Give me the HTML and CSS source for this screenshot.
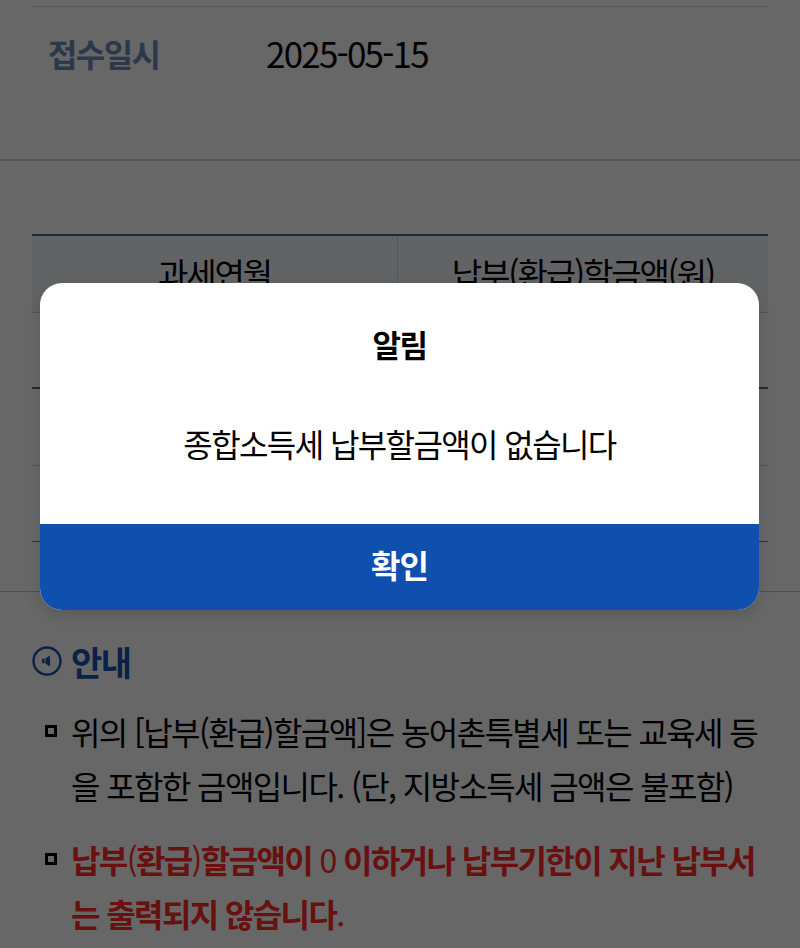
FILE: index.html
```html
<!DOCTYPE html>
<html lang="ko">
<head>
  <meta charset="UTF-8" />
  <title>종합소득세 납부</title>
  <link rel="stylesheet" href="styles.css">
</head>
<body>

  <div class="info-section">
    <div class="info-row">
      <div class="info-label">접수일시</div>
      <div class="info-value">2025-05-15</div>
    </div>
  </div>

  <div class="table-section">
    <div class="tax-table">
      <div class="table-head">
        <div class="head-cell">과세연월</div>
        <div class="head-cell">납부(환급)할금액(원)</div>
      </div>
      <div class="table-row row-sub"></div>
      <div class="table-row row-body"></div>
      <div class="table-row row-last"></div>
    </div>
  </div>

  <div class="notice">
    <h2 class="notice-title">
      <svg class="notice-icon" viewBox="0 0 30 30">
        <circle cx="15" cy="15" r="13.5" fill="none" stroke="#1c54b0" stroke-width="2.4"/>
        <path d="M10 12.8h2.6v4.4H10z M13.4 12.6l4.6-3v10.8l-4.6-3z" fill="#1c54b0"/>
      </svg>
      안내
    </h2>
    <ul class="notice-list">
      <li class="notice-item">
        <span class="bullet"></span>
        <span>위의 [납부(환급)할금액]은 농어촌특별세 또는 교육세 등을 포함한 금액입니다. (단, 지방소득세 금액은 불포함)</span>
      </li>
      <li class="notice-item notice-warn">
        <span class="bullet"></span>
        <span>납부<span class="thin">(</span>환급<span class="thin">)</span>할금액이 <span class="thin">0</span> 이하거나 납부기한이 지난 납부서는 출력되지 않습니다<span class="thin">.</span></span>
      </li>
    </ul>
  </div>

  <div class="overlay">
    <div class="modal">
      <div class="modal-title">알림</div>
      <div class="modal-text">종합소득세 납부할금액이 없습니다</div>
      <button class="modal-btn">확인</button>
    </div>
  </div>

</body>
</html>
```

FILE: styles.css
```css
* {
  box-sizing: border-box;
}

body {
  margin: 0;
  height: 948px;
  overflow: hidden;
  position: relative;
  font-family: 'Noto Sans CJK KR', 'Noto Sans', sans-serif;
  background: #fff;
  color: #000;
}

.info-section {
  padding: 6px 32px 0;
  height: 161px;
  border-bottom: 2px solid #d8d8d8;
}

.info-row {
  display: flex;
  align-items: center;
  height: 92px;
  border-top: 1px solid #d8d8d8;
  padding-left: 16px;
}

.info-label {
  width: 218px;
  font-size: 32px;
  font-weight: 700;
  letter-spacing: -1.6px;
  color: #6c8db8;
}

.info-value {
  font-size: 35px;
  letter-spacing: -1.8px;
}

.table-section {
  padding: 73px 32px 0;
  height: 431px;
  border-bottom: 1px solid #c4c4c4;
}

.tax-table {
  border-top: 2px solid #4a66a0;
}

.table-head {
  display: grid;
  grid-template-columns: 365px 1fr;
  height: 77px;
  background: #f3f6fb;
  border-bottom: 1px solid #cfcfcf;
}

.head-cell {
  display: flex;
  align-items: center;
  justify-content: center;
  padding-bottom: 3px;
  font-size: 33px;
  letter-spacing: -2.1px;
}

.head-cell + .head-cell {
  border-left: 1px solid #cfcfcf;
}

.table-row {
  height: 77px;
  border-bottom: 1px solid #cfcfcf;
}

.row-sub {
  height: 76px;
  border-bottom: 2px solid #4a66a0;
}

.row-last {
  height: 76px;
  border-bottom: 1px solid #777;
}

.notice {
  padding: 0 32px;
}

.notice-title {
  display: flex;
  align-items: center;
  gap: 9px;
  height: 60px;
  margin: 39px 0 13px;
  font-size: 34px;
  font-weight: 700;
  letter-spacing: -1.6px;
  color: #1c54b0;
}

.notice-icon {
  width: 30px;
  height: 30px;
}

.notice-list {
  list-style: none;
  margin: 0;
  padding: 0;
}

.notice-item {
  display: flex;
  gap: 14px;
  font-size: 32px;
  line-height: 54px;
  letter-spacing: -1.6px;
  margin-bottom: 20px;
}

.bullet {
  flex: none;
  width: 12px;
  height: 12px;
  margin: 21px 0 0 13px;
  border: 3px solid #000;
}

.notice-warn {
  font-weight: 700;
  color: #ff2c2c;
}

.thin {
  font-weight: 400;
}

.overlay {
  position: absolute;
  inset: 0;
  background: rgba(0, 0, 0, 0.595);
}

.modal {
  position: absolute;
  left: 40px;
  top: 283px;
  width: 719px;
  height: 327px;
  display: flex;
  flex-direction: column;
  background: #fff;
  border-radius: 22px;
  overflow: hidden;
  box-shadow: 0 6px 14px rgba(0, 0, 0, 0.12);
}

.modal-title {
  margin-top: 40px;
  text-align: center;
  font-size: 31px;
  line-height: 42px;
  font-weight: 700;
  letter-spacing: -1.4px;
}

.modal-text {
  margin-top: 53px;
  text-align: center;
  font-size: 32px;
  line-height: 50px;
  letter-spacing: -1.6px;
}

.modal-btn {
  margin-top: auto;
  height: 86px;
  padding: 0 0 6px;
  border: none;
  background: #0f4fae;
  color: #fff;
  font-family: inherit;
  font-size: 32px;
  font-weight: 700;
  letter-spacing: -1px;
}
```
